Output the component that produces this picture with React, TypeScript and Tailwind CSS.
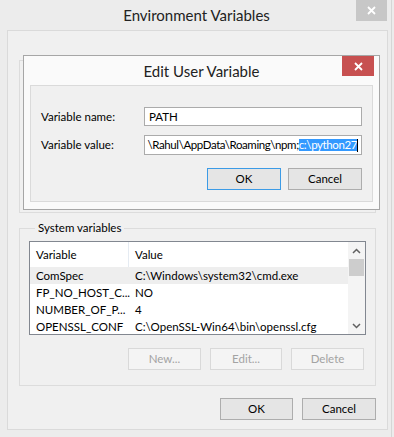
import React from "react";

const font = "font-['Lato','Noto_Sans',sans-serif]";

const rows = [
  { name: "ComSpec", value: "C:\\Windows\\system32\\cmd.exe", selected: true },
  { name: "FP_NO_HOST_C...", value: "NO" },
  { name: "NUMBER_OF_P...", value: "4" },
  { name: "OPENSSL_CONF", value: "C:\\OpenSSL-Win64\\bin\\openssl.cfg" },
];

const Btn: React.FC<{ label: string; w?: string; primary?: boolean; disabled?: boolean }> = ({
  label,
  w = "w-[74px]",
  primary,
  disabled,
}) => (
  <div
    className={`${w} h-[22px] shrink-0 flex items-center justify-center border ${
      disabled
        ? "border-[#d9d9d9] bg-[#f4f4f4] text-[#a3a3a3]"
        : primary
          ? "border-[#3c9be6] bg-[#e5e5e5] text-black"
          : "border-[#adadad] bg-[#e5e5e5] text-black"
    }`}
  >
    {label}
  </div>
);

const Chevron: React.FC<{ up?: boolean }> = ({ up }) => (
  <svg width="9" height="6" viewBox="0 0 9 6">
    <path
      d={up ? "M1 5 L4.5 1.5 L8 5" : "M1 1 L4.5 4.5 L8 1"}
      fill="none"
      stroke="#606060"
      strokeWidth="1.5"
    />
  </svg>
);

export default function App() {
  return (
    <div className={`relative w-[394px] h-[437px] bg-[#ececec] overflow-hidden ${font} text-[11.5px] text-black`}>
      <div className="w-[392px] h-full border-r border-[#d6d6d6]">
        {/* title bar */}
        <div className="relative h-[30px] flex items-center justify-center">
          <span className="text-[15px] text-[#222] pl-[2px]">Environment Variables</span>
          <div className="absolute top-0 right-[4px] w-[31px] h-[21px] bg-[#c7c7c7] flex items-center justify-center">
            <svg width="9" height="9" viewBox="0 0 9 9">
              <path d="M1 1 L8 8 M8 1 L1 8" stroke="#fff" strokeWidth="1.8" />
            </svg>
          </div>
        </div>

        {/* client area */}
        <div className="ml-[7px] w-[381px] h-[400px] border border-[#dadada] bg-[#f0f0f0] px-[11px] pt-[21px]">
          <fieldset className="h-[161px] border border-[#dcdcdc] px-[9px]">
            <legend className="ml-[6px] px-[3px] leading-[16px]">User variables for Rahul</legend>
          </fieldset>

          <fieldset className="mt-[7px] border border-[#dcdcdc] px-[9px] pb-[15px]">
            <legend className="ml-[6px] px-[3px] leading-[16px]">System variables</legend>
            <div className="mt-[5px] h-[94px] border border-[#828790] bg-white flex">
              <div className="flex-1 flex flex-col">
                <div className="h-[25px] flex items-center shrink-0">
                  <div className="w-[99px] h-full pl-[6px] flex items-center border-r border-[#e5ebf2]">Variable</div>
                  <div className="pl-[6px]">Value</div>
                </div>
                {rows.map((r) => (
                  <div
                    key={r.name}
                    className={`h-[17px] shrink-0 flex items-center whitespace-nowrap ${r.selected ? "bg-[#eeeeee]" : ""}`}
                  >
                    <div className="w-[99px] pl-[6px]">{r.name}</div>
                    <div className="pl-[6px]">{r.value}</div>
                  </div>
                ))}
              </div>
              <div className="w-[17px] bg-[#f4f4f4] flex flex-col items-center">
                <div className="h-[17px] flex items-center justify-center">
                  <Chevron up />
                </div>
                <div className="w-[15px] h-[17px] bg-[#cdcdcd]" />
                <div className="flex-1" />
                <div className="h-[17px] flex items-center justify-center">
                  <Chevron />
                </div>
              </div>
            </div>
            <div className="mt-[13px] flex justify-end gap-[9px] pr-[2px]">
              <Btn label="New..." w="w-[73px]" disabled />
              <Btn label="Edit..." w="w-[72px]" disabled />
              <Btn label="Delete" w="w-[73px]" disabled />
            </div>
          </fieldset>

          <div className="mt-[12px] flex justify-end gap-[9px]">
            <Btn label="OK" w="w-[73px]" />
            <Btn label="Cancel" />
          </div>
        </div>
      </div>

      {/* Edit User Variable dialog, overlaying the window */}
      <div className="absolute left-[23px] top-[55px] w-[357px] h-[155px] border border-[#a6a6a6] bg-[#fafafa] px-[6px] pb-[7px] flex flex-col">
        <div className="relative h-[29px] shrink-0 flex items-center justify-center">
          <span className="text-[15px] text-[#222] pt-[1px]">Edit User Variable</span>
          <div className="absolute top-0 right-[-1px] w-[32px] h-[20px] bg-[#c75050] flex items-center justify-center">
            <svg width="9" height="9" viewBox="0 0 9 9">
              <path d="M1 1 L8 8 M8 1 L1 8" stroke="#fff" strokeWidth="1.8" />
            </svg>
          </div>
        </div>
        <div className="flex-1 border border-[#dadada] bg-[#f0f0f0] px-[10px] pt-[21px]">
          <div className="grid grid-cols-[103px_218px] gap-y-[9px] items-center">
            <div>Variable name:</div>
            <div className="h-[19px] border border-[#ababab] bg-white pl-[4px] flex items-center">PATH</div>
            <div>Variable value:</div>
            <div className="h-[20px] border border-[#ababab] bg-white pr-[3px] flex items-center justify-end overflow-hidden whitespace-nowrap tracking-[-0.4px]">
              <span>\Rahul\AppData\Roaming\npm;</span>
              <span className="bg-[#3399ff] text-white leading-[12px]">c:\python27</span>
              <span className="w-[1px] h-[13px] bg-black shrink-0" />
            </div>
          </div>
          <div className="mt-[13px] w-[321px] flex justify-end gap-[7px]">
            <Btn label="OK" primary />
            <Btn label="Cancel" />
          </div>
        </div>
      </div>
    </div>
  );
}
